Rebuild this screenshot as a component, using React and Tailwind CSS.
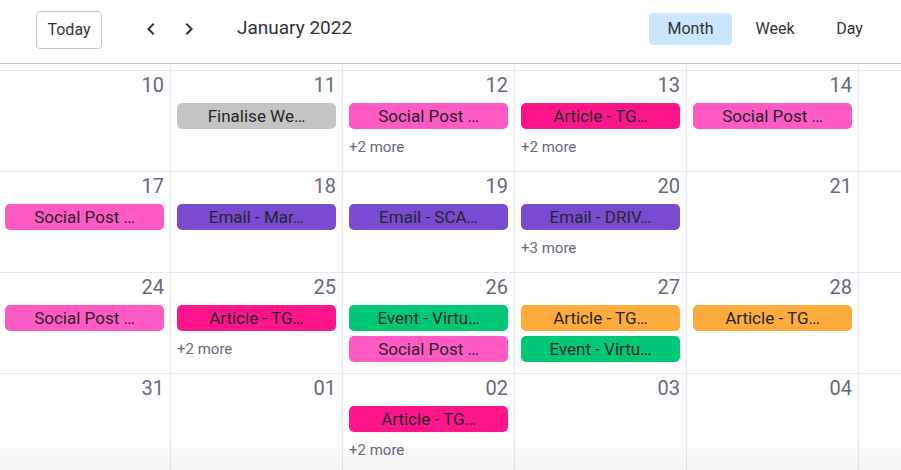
import { MdChevronLeft, MdChevronRight } from "react-icons/md";

const COLORS = {
  gray: "bg-[#c4c4c4]",
  pink: "bg-[#ff5ac4]",
  article: "bg-[#ff158a]",
  purple: "bg-[#784bd1]",
  green: "bg-[#00c875]",
  orange: "bg-[#fdab3d]",
};

// only the five visible days of each week; the sixth column is cut by the viewport
const weeks = [
  [
    { day: "10" },
    { day: "11", events: [["gray", "Finalise We…"]] },
    { day: "12", events: [["pink", "Social Post …"]], more: 2 },
    { day: "13", events: [["article", "Article - TG…"]], more: 2 },
    { day: "14", events: [["pink", "Social Post …"]] },
  ],
  [
    { day: "17", events: [["pink", "Social Post …"]] },
    { day: "18", events: [["purple", "Email - Mar…"]] },
    { day: "19", events: [["purple", "Email - SCA…"]] },
    { day: "20", events: [["purple", "Email - DRIV…"]], more: 3 },
    { day: "21" },
  ],
  [
    { day: "24", events: [["pink", "Social Post …"]] },
    { day: "25", events: [["article", "Article - TG…"]], more: 2 },
    {
      day: "26",
      events: [
        ["green", "Event - Virtu…"],
        ["pink", "Social Post …"],
      ],
    },
    {
      day: "27",
      events: [
        ["orange", "Article - TG…"],
        ["green", "Event - Virtu…"],
      ],
    },
    { day: "28", events: [["orange", "Article - TG…"]] },
  ],
  [
    { day: "31" },
    { day: "01" },
    { day: "02", events: [["article", "Article - TG…"]], more: 2 },
    { day: "03" },
    { day: "04" },
  ],
];

function DayCell({ cell }) {
  return (
    <div className="border-l border-[#e6e9ef] px-1.5 flex flex-col">
      <div className="pt-[2px] text-right text-[20px] leading-6 text-[#676879]">
        {cell.day}
      </div>
      {cell.events && (
        <div className="mt-1.5 flex flex-col gap-[5px]">
          {cell.events.map(([color, title], i) => (
            <div
              key={i}
              className={`${COLORS[color]} h-[26px] rounded-[5px] text-center text-[17px] leading-[26px] text-[#25262b] whitespace-nowrap overflow-hidden`}
            >
              {title}
            </div>
          ))}
        </div>
      )}
      {cell.more && (
        <div className="mt-2 text-[15px] leading-5 text-[#676879]">
          +{cell.more} more
        </div>
      )}
    </div>
  );
}

export default function App() {
  return (
    <div
      className="relative h-[470px] w-[901px] overflow-hidden bg-white"
      style={{ fontFamily: "Roboto, 'Liberation Sans', sans-serif" }}
    >
      {/* Toolbar */}
      <div className="h-[64px] flex items-center border-b border-[#c3c6d4] pl-9 pr-5 pb-1">
        <button className="h-[38px] w-[66px] rounded-[4px] border border-[#c3c6d4] text-[16px] text-[#323338]">
          Today
        </button>
        <div className="ml-[33px] -mt-[2px] flex items-center gap-[6px]">
          <button className="w-8 h-8 flex items-center justify-center text-[#323338]">
            <MdChevronLeft size={24} />
          </button>
          <button className="w-8 h-8 flex items-center justify-center text-[#323338]">
            <MdChevronRight size={24} />
          </button>
        </div>
        <h1 className="ml-8 text-[19px] text-[#323338] -mt-[3px]">
          January 2022
        </h1>
        <div className="ml-auto -mt-[1px] flex items-center gap-1.5">
          <button className="h-8 w-[83px] rounded-[4px] bg-[#cce5ff] text-[16px] text-[#323338]">
            Month
          </button>
          <button className="h-8 w-[74px] rounded-[4px] text-[16px] text-[#323338]">
            Week
          </button>
          <button className="h-8 w-[63px] rounded-[4px] text-[16px] text-[#323338]">
            Day
          </button>
        </div>
      </div>

      {/* Month grid */}
      <div className="-ml-0.5 w-[1204px]">
        <div className="grid grid-cols-[repeat(7,172px)] h-[7px] border-b border-[#e6e9ef]">
          {Array.from({ length: 7 }).map((_, i) => (
            <div key={i} className="border-l border-[#e6e9ef]" />
          ))}
        </div>
        {weeks.map((week, w) => (
          <div
            key={w}
            className="grid grid-cols-[repeat(7,172px)] h-[101px] border-b border-[#e6e9ef]"
          >
            {week.map((cell) => (
              <DayCell key={cell.day} cell={cell} />
            ))}
            <div className="border-l border-[#e6e9ef]" />
          </div>
        ))}
      </div>

      {/* bottom fade */}
      <div className="pointer-events-none absolute inset-x-0 bottom-0 h-10 bg-gradient-to-b from-black/0 to-black/[0.04]" />
    </div>
  );
}
